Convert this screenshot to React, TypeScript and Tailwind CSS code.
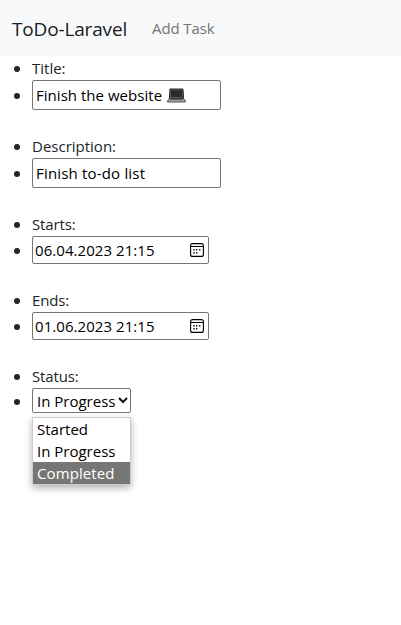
import type { ReactNode } from 'react';

function Row({ children, className = '' }: { children: ReactNode; className?: string }) {
  return (
    <li className={`flex items-center ${className}`}>
      <span className="ml-[14px] mr-3 mt-[2px] size-[6px] shrink-0 rounded-full bg-[#212529]" />
      {children}
    </li>
  );
}

function Label({ children, className = '' }: { children: ReactNode; className?: string }) {
  return (
    <Row className="h-6">
      <span className={`whitespace-nowrap text-[#212529] ${className}`}>{children}</span>
    </Row>
  );
}

function TextField({ children }: { children: ReactNode }) {
  return (
    <div className="flex h-[30px] w-[189px] items-center rounded-[2px] border border-[#767676] bg-white pl-[3px]">
      {children}
    </div>
  );
}

function CalendarIcon() {
  return (
    <svg width="14" height="14" viewBox="0 0 14 14" fill="none" className="shrink-0">
      <rect x="0.6" y="0.6" width="12.8" height="12.8" rx="2" stroke="#000" strokeWidth="1.1" />
      <path d="M1 3.5h12" stroke="#000" />
      <path d="M6 6h1.4v1.4H6zM9 6h1.4v1.4H9zM3.3 6h1.4v1.4H3.3zM3.3 9h1.4v1.4H3.3zM6 9h1.4v1.4H6z" fill="#111" />
    </svg>
  );
}

function DateField({ value }: { value: string }) {
  return (
    <div className="flex h-7 w-[177px] items-center justify-between rounded-[2px] border border-[#767676] bg-white pl-[2px] pr-1">
      <span className="whitespace-nowrap tracking-[0.06px]">{value}</span>
      <CalendarIcon />
    </div>
  );
}

function Laptop() {
  return (
    <svg width="19" height="15" viewBox="0 0 19 15" className="ml-[5px]">
      <path d="M3 1h13l.6 9.5H2.4z" fill="#666" stroke="#222" strokeLinejoin="round" />
      <path d="M4 2.2h11l.3 7H3.7z" fill="#2b2b2b" />
      <path d="M2.3 10.5h14.4l1.8 2.5v1H.5v-1z" fill="#aaa" stroke="#333" strokeWidth=".8" />
      <path d="M3 11.6h13" stroke="#555" />
    </svg>
  );
}

export default function App() {
  return (
    <div className="min-h-[625px] bg-white font-['Open_Sans','Noto_Sans',sans-serif] text-[15px] leading-6 text-black">
      <nav className="flex h-14 items-center bg-[#f8f9fa] pl-3">
        <span className="w-[140px] whitespace-nowrap pt-px text-[19px] tracking-[-0.16px] text-[#1a1c1e]">ToDo-Laravel</span>
        <span className="whitespace-nowrap tracking-[-0.1px] text-[#747575]">Add Task</span>
      </nav>
      <ul>
        <Label>Title:</Label>
        <Row className="mb-6">
          <TextField>
            <span className="whitespace-nowrap tracking-[0.03px]">Finish the website</span>
            <Laptop />
          </TextField>
        </Row>
        <Label>Description:</Label>
        <Row className="mb-6">
          <TextField>
            <span className="whitespace-nowrap tracking-[0.18px]">Finish to-do list</span>
          </TextField>
        </Row>
        <Label className="tracking-[-0.15px]">Starts:</Label>
        <Row className="mb-6"><DateField value="06.04.2023 21:15" /></Row>
        <Label className="tracking-[-0.15px]">Ends:</Label>
        <Row className="mb-6"><DateField value="01.06.2023 21:15" /></Row>
        <Label className="tracking-[-0.15px]">Status:</Label>
        <Row>
          <div className="relative">
            <div className="flex h-[25px] w-[99px] items-center rounded-[2px] border border-[#767676] bg-white pl-1">
              <span className="w-[81px] whitespace-nowrap">In Progress</span>
              <svg width="10" height="7" viewBox="0 0 10 7" fill="none" className="shrink-0">
                <path d="M1 1l4 4 4-4" stroke="#111" strokeWidth="2" />
              </svg>
            </div>
            <div className="absolute left-0 top-[29px] w-[99px] border border-[#ccc] bg-white leading-[22px] shadow-[0_3px_7px_rgba(0,0,0,0.3)]">
              <div className="h-[22px] pl-1">Started</div>
              <div className="h-[22px] whitespace-nowrap pl-1">In Progress</div>
              <div className="h-[22px] bg-[#767676] pl-1 tracking-[0.1px] text-white">Completed</div>
            </div>
          </div>
        </Row>
      </ul>
    </div>
  );
}
